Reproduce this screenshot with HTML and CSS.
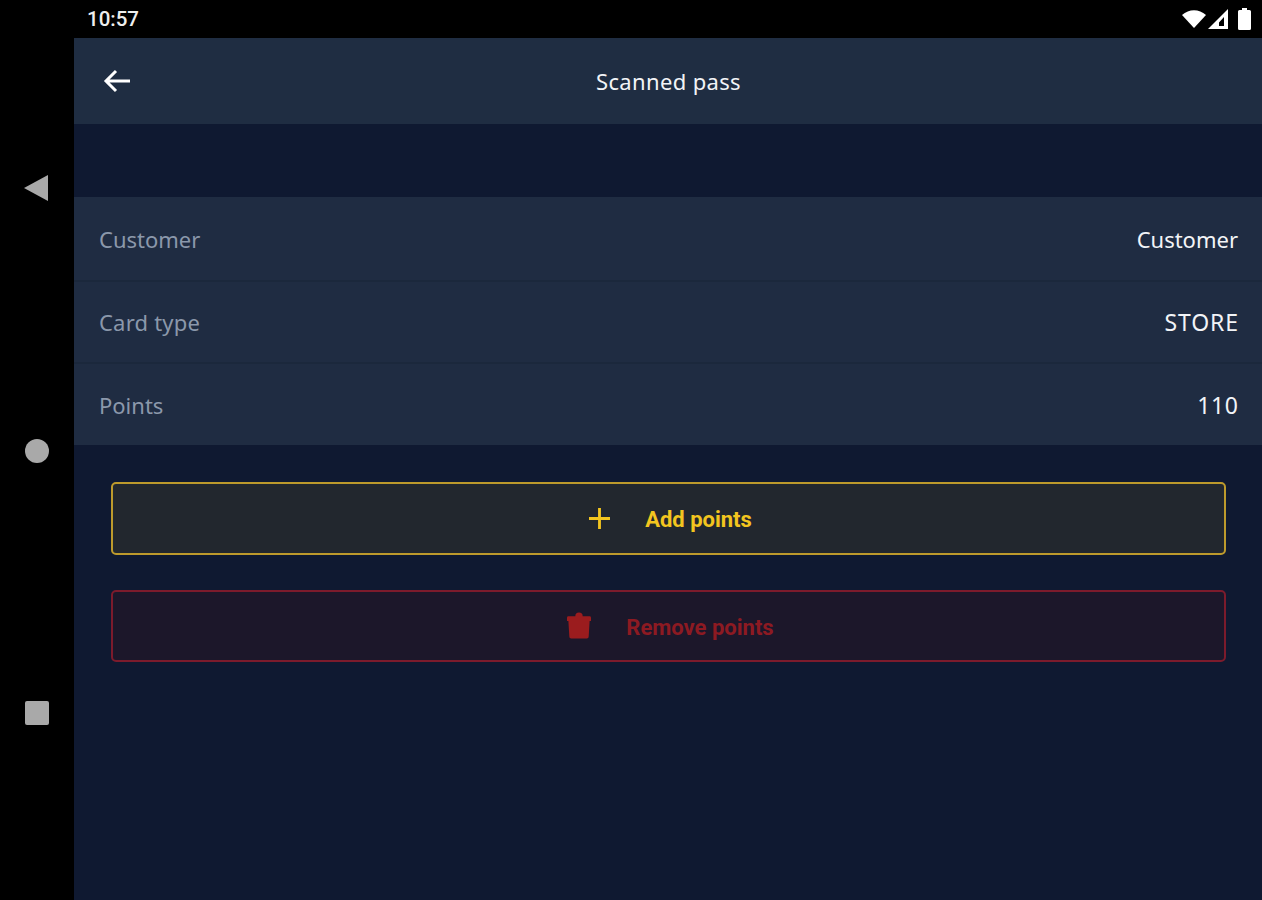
FILE: index.html
```html
<!DOCTYPE html>
<html lang="en">
<head>
<meta charset="utf-8">
<title>Scanned pass</title>
<link rel="stylesheet" href="styles.css">
</head>
<body>
<div class="device">
  <nav class="nav">
    <svg class="nav-back" viewBox="0 0 24 26"><path d="M24 0V26L0 13Z"/></svg>
    <span class="nav-home"></span>
    <span class="nav-recent"></span>
  </nav>
  <div class="column">
    <div class="status">
      <span class="time">10:57</span>
      <div class="status-icons">
        <svg class="wifi" viewBox="0 0 24 18"><path d="M0 5C7-1.500 17-1.500 24 5L12 18Z"/></svg>
        <svg class="signal" viewBox="0 0 20 20"><path fill-rule="evenodd" d="M20 0V20H0ZM16 8 11 13.500V17H16Z"/></svg>
        <svg class="battery" viewBox="0 0 13 22"><path d="M4 0H9V2H11.500Q13 2 13 3.500V20.500Q13 22 11.500 22H1.500Q0 22 0 20.500V3.500Q0 2 1.500 2H4Z"/></svg>
      </div>
    </div>
    <main class="screen">
      <header class="topbar">
        <svg class="back" viewBox="0 0 28 24"><path d="M27 12H3M13 2 3 12 13 22"/></svg>
        <h1 class="title">Scanned pass</h1>
      </header>
      <section class="rows">
        <div class="row row-tall"><span class="label">Customer</span><span class="value">Customer</span></div>
        <div class="row"><span class="label label-wide">Card type</span><span class="value value-caps">STORE</span></div>
        <div class="row row-tall"><span class="label">Points</span><span class="value value-num">110</span></div>
      </section>
      <div class="actions">
        <button class="btn btn-add">
          <svg class="icon-plus" viewBox="0 0 22 22"><path d="M11 0V22M0 11H22"/></svg>
          <span>Add points</span>
        </button>
        <button class="btn btn-remove">
          <svg class="icon-trash" viewBox="0 0 26 28"><path d="M9 4Q9 0 13 0T17 4H24.500Q26 4 26 5.500V9H24.500L23.500 26Q23.500 28 21.500 28H4.500Q2.500 28 2.500 26L1.500 9H0V5.500Q0 4 1.500 4Z"/></svg>
          <span>Remove points</span>
        </button>
      </div>
    </main>
  </div>
</div>
</body>
</html>
```

FILE: styles.css
```css
* { box-sizing: border-box; }
html, body { margin: 0; height: 100%; }
body { background: #000; font-family: "Noto Sans", sans-serif; overflow: hidden; }
.device { display: flex; width: 1262px; height: 900px; }
.nav {
  width: 74px; flex: none; height: 900px;
  display: flex; flex-direction: column; align-items: center; justify-content: center; gap: 238px;
}
.nav-back { width: 24px; height: 26px; fill: #a9a9a9; margin-left: -2px; }
.nav-home { width: 24px; height: 24px; border-radius: 50%; background: #a9a9a9; }
.nav-recent { width: 24px; height: 24px; border-radius: 2px; background: #a9a9a9; }
.column { flex: 1; display: flex; flex-direction: column; min-width: 0; }
.status {
  height: 38px; flex: none; display: flex; align-items: center; justify-content: space-between;
  padding: 0 11px 0 13px; color: #eee;
}
.time { font-family: "Roboto", sans-serif; font-size: 20.5px; font-weight: 500; }
.status-icons { display: flex; align-items: center; margin-top: -1px; }
.status-icons svg { fill: #fff; display: block; }
.wifi { width: 24px; height: 18px; }
.signal { width: 20px; height: 20px; margin-left: 2px; }
.battery { width: 13px; height: 22px; margin-left: 10px; }
.screen { flex: 1; background: #0f1931; display: flex; flex-direction: column; }
.topbar {
  height: 86px; flex: none; background: #1f2d42; position: relative;
  display: flex; align-items: center; justify-content: center;
}
.back {
  position: absolute; left: 29px; top: 31px; width: 28px; height: 24px;
  fill: none; stroke: #fff; stroke-width: 3;
}
.title { margin: 0 0 0 1px; font-size: 22px; font-weight: 400; letter-spacing: .35px; color: #f2f4f7; }
.rows { margin-top: 73px; display: flex; flex-direction: column; }
.row {
  height: 82px; background: #1f2c42; border-top: 2px solid #1b283c;
  display: flex; align-items: center; justify-content: space-between;
  padding: 0 24px 0 25px; font-size: 22px;
}
.row-tall { height: 83px; }
.row:first-child { border-top: 0; }
.label { color: #8b98ab; }
.label-wide { letter-spacing: .2px; }
.value { color: #f2f4f7; }
.value-caps { font-size: 23px; letter-spacing: .9px; margin-right: -.9px; }
.value-num { font-size: 23px; letter-spacing: .6px; margin-right: -.6px; }
.actions { padding: 37px 36px 0 37px; display: flex; flex-direction: column; gap: 35px; }
.btn {
  height: 73px; border-radius: 5px; border: 2px solid; background: none;
  display: flex; align-items: center; justify-content: center; gap: 35px;
  font-family: "Roboto", sans-serif; font-size: 22px; font-weight: 700; padding: 2px 0 0 4px;
}
.btn-add { border-color: #bd9a2c; background: #22272e; color: #f3c51f; }
.btn-remove { height: 72px; border-color: #7c1b2c; background: #1c172a; color: #8d1a22; }
.icon-plus { width: 21px; height: 21px; fill: none; stroke: #f3c51f; stroke-width: 3; margin-top: -3px; }
.icon-trash { width: 24px; height: 27px; fill: #9b1c1e; margin-top: -4px; }
```
